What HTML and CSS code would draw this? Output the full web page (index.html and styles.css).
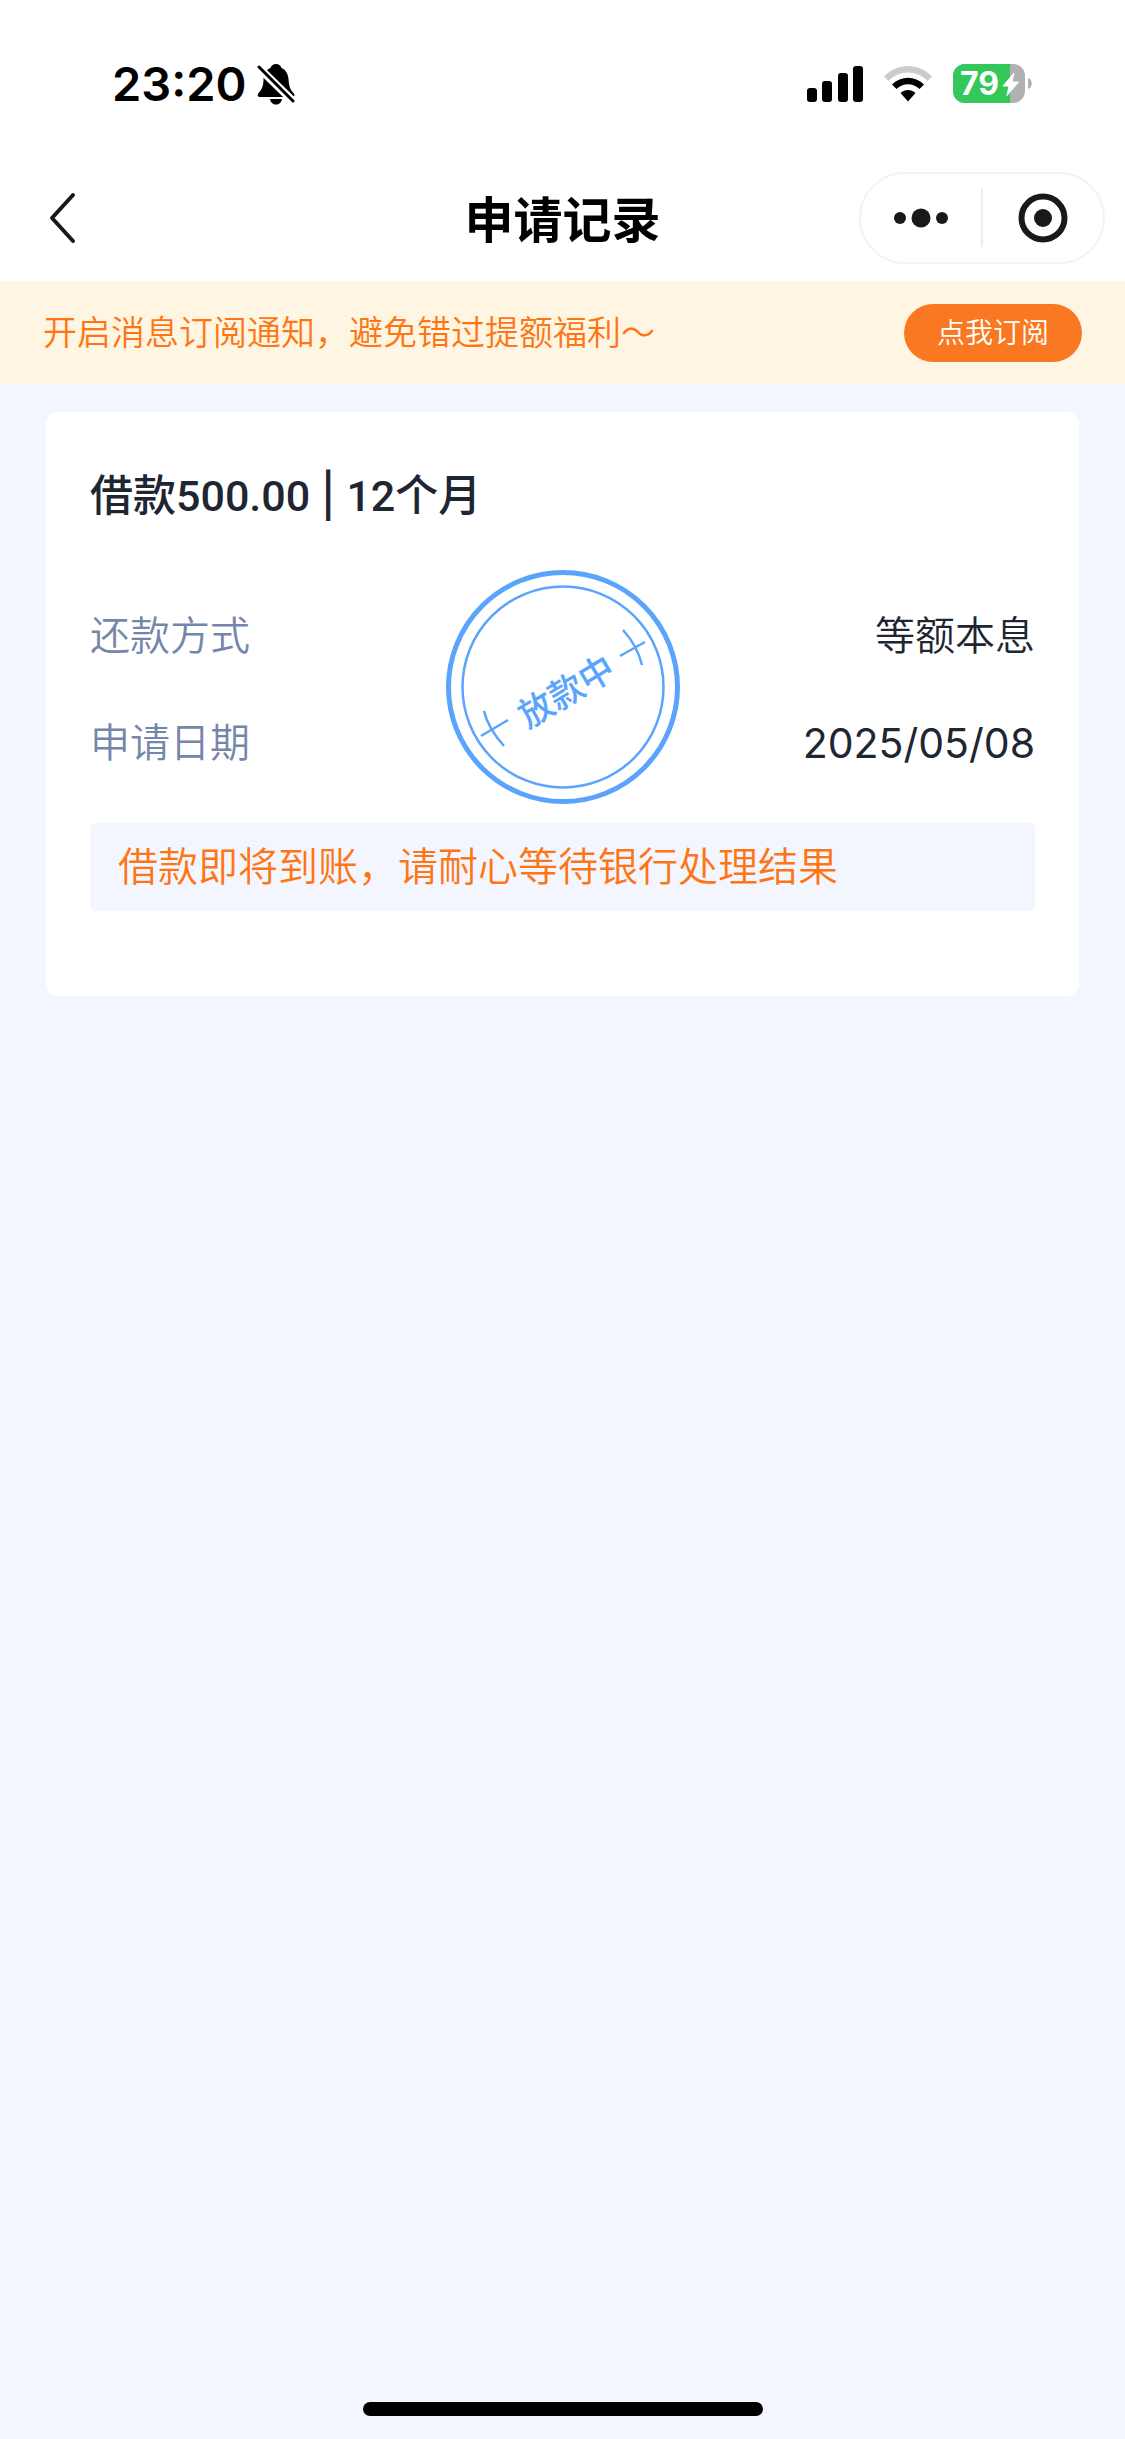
FILE: index.html
```html
<!DOCTYPE html>
<html lang="zh-CN">
<head>
<meta charset="utf-8">
<meta name="viewport" content="width=device-width, initial-scale=1">
<title>申请记录</title>
<link rel="stylesheet" href="styles.css">
</head>
<body>
<div class="page">
  <div class="status">
    <div class="status-left">
      <span class="clock">23:20</span>
      <svg class="bell" width="38" height="42" viewBox="0 0 38 42" aria-hidden="true">
        <path d="M19 1c-3 0-5 1.800-5.500 4C9 7 6.500 11 6.500 16c0 7-1.500 10-4.500 13.500C-.500 32.500 1 34 3 34h32c2.500 0 3.500-2 1-4.500C33 26 32 23 31.500 16 31 11 29 7 24.500 5 24 2.800 22 1 19 1z"/>
        <path d="M13 36h12c-.500 3.500-3 5.500-6 5.500s-5.500-2-6-5.500z"/>
        <path d="M-1 2L38 40" stroke="#fff" stroke-width="8"/>
        <path d="M2 4L36 38" stroke="#000" stroke-width="3" stroke-linecap="round"/>
      </svg>
    </div>
    <div class="status-right">
      <svg width="56" height="36" viewBox="0 0 56 36" aria-hidden="true">
        <rect y="22" width="10" height="14" rx="3"/><rect x="15" y="15" width="10" height="21" rx="3"/><rect x="31" y="7" width="10" height="29" rx="3"/><rect x="46" width="10" height="36" rx="3"/>
      </svg>
      <svg width="48" height="36" viewBox="0 0 48 36" aria-hidden="true">
        <path d="M0 10.500C13-3.500 35-3.500 48 10.500l-4.500 4.500C32.500 3.500 15.500 3.500 4.500 15z" fill="#ccc"/>
        <path d="M8 18.500c9-9 23-9 32 0L35.500 23c-6.500-6.500-16.500-6.500-23 0z"/>
        <path d="M16.500 27c4.500-4 10.500-4 15 0L24 35.500z"/>
      </svg>
      <svg width="80" height="40" viewBox="0 0 80 40" aria-label="79%">
        <clipPath id="cell"><rect width="72" height="39" rx="12"/></clipPath>
        <g clip-path="url(#cell)"><rect width="72" height="39" fill="#b1b1b1"/><rect width="57" height="39" fill="#34c759"/></g>
        <path d="M75 14c5 1 5 10 0 11z" fill="#b1b1b1"/>
        <text class="charge" x="7" y="31">79</text>
        <path d="M61 9L50 22h6l-2 9.500L65.500 18H59z" fill="#fff" stroke="#fff" stroke-linejoin="round"/>
      </svg>
    </div>
  </div>

  <header class="nav">
    <button class="back" type="button" aria-label="返回">
      <svg width="28" height="52" viewBox="0 0 28 52"><path d="M25 3L4 26l21 23" fill="none" stroke="#191919" stroke-width="4" stroke-linecap="round" stroke-linejoin="round"/></svg>
    </button>
    <h1 class="nav-title">申请记录</h1>
    <div class="capsule">
      <button class="capsule-button" type="button" aria-label="更多">
        <svg width="54" height="20" viewBox="0 0 54 20" fill="#191919"><circle cx="6" cy="10" r="6"/><circle cx="27" cy="10" r="9.500"/><circle cx="48" cy="10" r="6"/></svg>
      </button>
      <button class="capsule-button" type="button" aria-label="关闭">
        <svg width="50" height="50" viewBox="0 0 50 50"><circle cx="25" cy="25" r="21.500" fill="none" stroke="#191919" stroke-width="6"/><circle cx="25" cy="25" r="9" fill="#191919"/></svg>
      </button>
    </div>
  </header>

  <div class="subscribe">
    <span>开启消息订阅通知，避免错过提额福利～</span>
    <button class="subscribe-button" type="button">点我订阅</button>
  </div>

  <main class="content">
    <article class="card">
      <h2 class="card-title">借款500.00 <span class="divider">|</span> 12个月</h2>
      <dl class="details">
        <div class="row"><dt>还款方式</dt><dd>等额本息</dd></div>
        <div class="row"><dt>申请日期</dt><dd class="date">2025/05/08</dd></div>
      </dl>
      <svg class="stamp" width="236" height="236" viewBox="0 0 236 236" aria-label="放款中">
        <g fill="none" stroke="#5aa4fd">
          <circle cx="118" cy="118" r="114.500" stroke-width="5"/>
          <circle cx="118" cy="118" r="100.500" stroke-width="2.500"/>
          <path d="M36 167l27-16M39 142c3 13 11 25 20 35M175 87l25-14M178 61c9 10 16 22 19 35" stroke-width="2.500"/>
        </g>
        <text class="stamp-text" transform="translate(121 122) rotate(-31)" x="0" y="13">放款中</text>
      </svg>
      <p class="message">借款即将到账，请耐心等待银行处理结果</p>
    </article>
  </main>
  <div class="home-indicator"></div>
</div>
</body>
</html>
```
FILE: styles.css
```css
* { box-sizing: border-box; }
body {
  margin: 0;
  background: #f3f6fe;
  color: #202631;
  font-family: Inter, "Noto Sans CJK SC", sans-serif;
  font-weight: 350;
}
h1, h2, p, dl, dd { margin: 0; }
button { border: 0; padding: 0; background: none; font: inherit; color: inherit; }
svg { display: block; }

.page { display: flex; flex-direction: column; min-height: 100vh; }

.status {
  display: flex;
  justify-content: space-between;
  height: 154px;
  padding: 14px 92px 0 112px;
  align-items: center;
  background: #fff;
  color: #000;
}
.status-left, .status-right { display: flex; align-items: center; }
.status-left { gap: 11px; }
.status-right { gap: 21px; }
.clock { font-size: 47px; line-height: 56px; font-weight: 600; }
.charge { font-size: 32px; font-weight: 700; fill: #fff; }

.nav {
  display: grid;
  grid-template-columns: 1fr auto 1fr;
  align-items: center;
  height: 127px;
  padding: 0 20px;
  background: #fff;
  color: #000;
}
.nav-title { padding-top: 6px; font-size: 49px; line-height: 72px; font-weight: 700; }
.back { justify-self: start; padding: 0 28px; }
.capsule {
  display: flex;
  justify-self: end;
  width: 246px;
  height: 92px;
  border: 2px solid #f3f3f3;
  border-radius: 46px;
  align-items: center;
}
.capsule-button { flex: 1; display: flex; justify-content: center; align-items: center; height: 58px; }
.capsule-button + .capsule-button { border-left: 2px solid #ececec; }

.subscribe {
  display: flex;
  justify-content: space-between;
  align-items: center;
  height: 103px;
  padding: 0 43px;
  background: #fef5e2;
  color: #ff7514;
  font-size: 34px;
  line-height: 48px;
}
.subscribe-button {
  width: 178px;
  height: 58px;
  border-radius: 29px;
  background: #fb7822;
  color: #fff;
  font-size: 28px;
  line-height: 40px;
}

.content { flex: 1; padding: 28px 46px; }
.card {
  position: relative;
  padding: 49px 44px 85px;
  border-radius: 12px;
  background: #fff;
}
.card-title {
  font-family: Roboto, "Noto Sans CJK SC", sans-serif;
  font-size: 43px;
  line-height: 68px;
  font-weight: 500;
}
.divider { font-family: Inter, sans-serif; }
.details { padding-top: 51px; }
.row {
  display: flex;
  justify-content: space-between;
  height: 107px;
  padding-top: 25px;
  font-size: 40px;
  line-height: 60px;
}
.row dt { color: #7487aa; }
.date { font-size: 41px; font-weight: 400; }
.stamp { position: absolute; top: 157px; left: calc(50% - 118px); }
.stamp-text { font-size: 35px; font-weight: 500; text-anchor: middle; fill: #5aa4fd; }
.message {
  margin-top: 28px;
  padding: 14px 28px;
  border-radius: 6px;
  background: #f3f6fe;
  color: #ff7514;
  font-size: 40px;
  line-height: 60px;
}
.home-indicator {
  width: 400px;
  height: 14px;
  margin: 0 auto 23px;
  border-radius: 7px;
  background: #000;
}
```
